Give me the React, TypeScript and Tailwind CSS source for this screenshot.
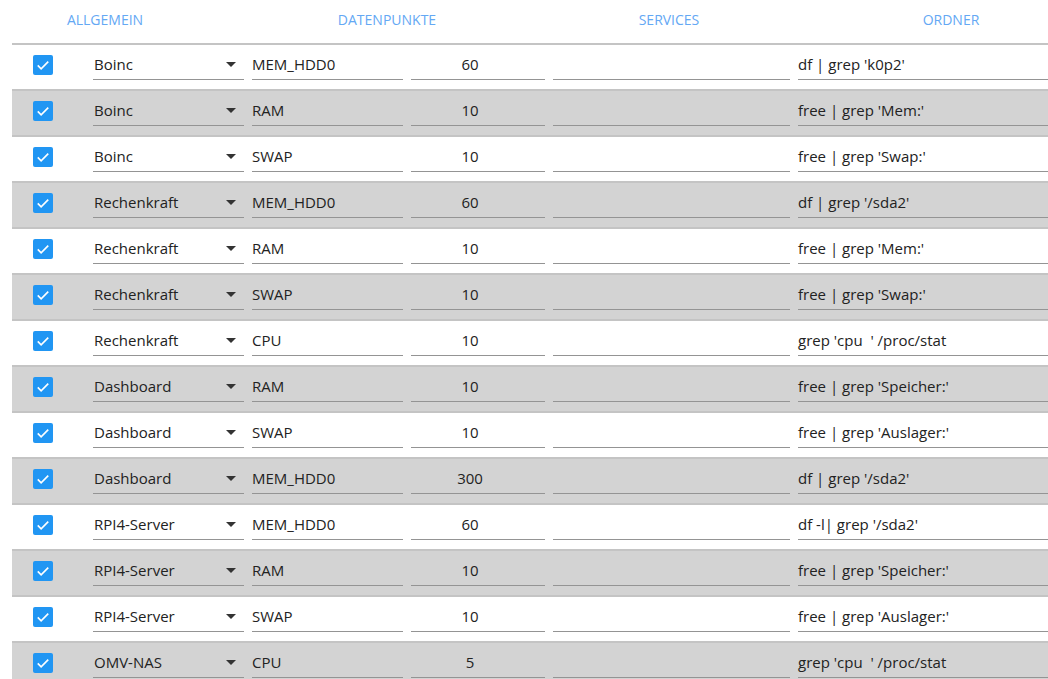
const rows = [
  { group: "Boinc", point: "MEM_HDD0", interval: "60", cmd: "df | grep 'k0p2'" },
  { group: "Boinc", point: "RAM", interval: "10", cmd: "free | grep 'Mem:'" },
  { group: "Boinc", point: "SWAP", interval: "10", cmd: "free | grep 'Swap:'" },
  { group: "Rechenkraft", point: "MEM_HDD0", interval: "60", cmd: "df | grep '/sda2'" },
  { group: "Rechenkraft", point: "RAM", interval: "10", cmd: "free | grep 'Mem:'" },
  { group: "Rechenkraft", point: "SWAP", interval: "10", cmd: "free | grep 'Swap:'" },
  { group: "Rechenkraft", point: "CPU", interval: "10", cmd: "grep 'cpu  ' /proc/stat" },
  { group: "Dashboard", point: "RAM", interval: "10", cmd: "free | grep 'Speicher:'" },
  { group: "Dashboard", point: "SWAP", interval: "10", cmd: "free | grep 'Auslager:'" },
  { group: "Dashboard", point: "MEM_HDD0", interval: "300", cmd: "df | grep '/sda2'" },
  { group: "RPI4-Server", point: "MEM_HDD0", interval: "60", cmd: "df -l| grep '/sda2'" },
  { group: "RPI4-Server", point: "RAM", interval: "10", cmd: "free | grep 'Speicher:'" },
  { group: "RPI4-Server", point: "SWAP", interval: "10", cmd: "free | grep 'Auslager:'" },
  { group: "OMV-NAS", point: "CPU", interval: "5", cmd: "grep 'cpu  ' /proc/stat" },
];

const tabs = ["Allgemein", "Datenpunkte", "Services", "Ordner"];

const Field = ({ children, className = "" }: { children?: React.ReactNode; className?: string }) => (
  <div className={`h-[35px] pt-[8px] border-b border-[#949494] whitespace-pre ${className}`}>{children}</div>
);

const Check = () => (
  <div className="w-5 h-5 rounded-[2px] bg-[#2196f3] flex items-center justify-center">
    <svg width="18" height="18" viewBox="0 0 24 24">
      <path d="M5 12.5l4.5 4.5L19 7.5" fill="none" stroke="#fff" strokeWidth="2.2" />
    </svg>
  </div>
);

export default function App() {
  return (
    <div className="w-[1048px] h-[679px] overflow-hidden bg-white text-[#222] font-['Open_Sans',sans-serif]">
      <div className="flex ml-[-36px] h-[43px] items-center">
        {tabs.map((t) => (
          <div key={t} className="w-[282px] shrink-0 text-center uppercase text-[14px] text-[#64a8f4] pb-[5px]">
            {t}
          </div>
        ))}
      </div>

      <div className="pl-[12px]">
        {rows.map((r, i) => (
          <div
            key={i}
            className={`flex h-[46px] border-t-2 border-[#c4c4c4] text-[15px] whitespace-nowrap ${
              i % 2 === 1 ? "bg-[#d3d3d3]" : "bg-white"
            }`}
          >
            <div className="w-[76px] shrink-0 pl-[21px] pt-[10px]">
              <Check />
            </div>
            <div className="w-[160px] shrink-0 pl-[5px] pr-[4px]">
              <Field className="flex justify-between pl-[1px] pr-[8px]">
                <span>{r.group}</span>
                <svg width="10" height="5" viewBox="0 0 10 5" className="mt-[9px]">
                  <path d="M0 0h10L5 5z" fill="#333" />
                </svg>
              </Field>
            </div>
            <div className="w-[159px] shrink-0 px-[4px]">
              <Field>{r.point}</Field>
            </div>
            <div className="w-[142px] shrink-0 px-[4px]">
              <Field className="text-center pr-[16px]">{r.interval}</Field>
            </div>
            <div className="w-[245px] shrink-0 px-[4px]">
              <Field />
            </div>
            <div className="w-[270px] shrink-0 pl-[4px]">
              <Field>{r.cmd}</Field>
            </div>
          </div>
        ))}
      </div>
    </div>
  );
}
